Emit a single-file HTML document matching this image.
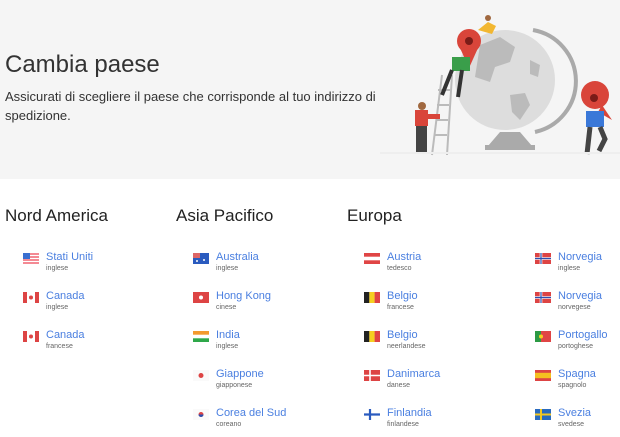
<!DOCTYPE html><html><head><meta charset="utf-8"><style>
*{margin:0;padding:0;box-sizing:border-box}
body{width:620px;height:434px;background:#fff;font-family:"Liberation Sans",Arial,sans-serif;position:relative;overflow:hidden}
.hdr{position:absolute;left:0;top:0;width:620px;height:179px;background:#f5f5f5}
h1{position:absolute;left:5px;top:51px;font-size:24px;font-weight:normal;color:#333}
.sub{position:absolute;left:5px;top:87px;width:400px;font-size:13px;line-height:19px;color:#333}
h2{position:absolute;top:206px;font-size:17px;font-weight:normal;color:#222}
.it{position:absolute;height:30px}
.it .f{position:absolute;left:0;top:2px;width:16px;height:11px}
.it .n{position:absolute;left:23px;top:0;font-size:11px;color:#4a7fe0;white-space:nowrap}
.it .l{position:absolute;left:23px;top:14px;font-size:7px;color:#666;white-space:nowrap}
</style></head><body>
<div class="hdr"></div>
<h1>Cambia paese</h1>
<div class="sub">Assicurati di scegliere il paese che corrisponde al tuo indirizzo di spedizione.</div>
<svg style="position:absolute;left:380px;top:0" width="240" height="180">
<path d="M530 0" />
<path d="M153 30 A52 52 0 0 1 155 132" fill="none" stroke="#aaa" stroke-width="4" transform="translate(0,0)"/>
<circle cx="125" cy="80" r="50" fill="#ddd"/>
<path d="M100 45 l20 -8 15 10 -5 15 -15 5 -5 15 -15 -5 z M130 95 l15 -2 5 12 -10 15 -8 -8 z M150 60 l10 5 -2 12 -8 -3z" fill="#bbb"/>
<path d="M120 132 l-12 14 h44 l-12 -14z" fill="#aaa"/>
<rect x="105" y="145" width="50" height="5" fill="#aaa"/>
<path d="M62 75 l-10 80 M72 75 l-5 80 M58 90h12M57 105h12M56 120h12M55 135h12" stroke="#bbb" stroke-width="2"/>
<circle cx="89" cy="41" r="12" fill="#d9453a"/><path d="M80 48 l9 20 9-20z" fill="#d9453a"/><circle cx="89" cy="41" r="4" fill="#7a1c18"/>
<rect x="72" y="57" width="18" height="14" fill="#3a9e4a"/><path d="M72 70 l-10 25 M82 70 l-4 27" stroke="#333" stroke-width="4"/>
<path d="M98 30 l10 -8 8 4 -4 8z" fill="#f2b731"/><circle cx="108" cy="18" r="3" fill="#a0683f"/>
<rect x="35" y="110" width="13" height="16" fill="#d9453a"/><rect x="48" y="114" width="12" height="5" fill="#d9453a"/><rect x="36" y="126" width="11" height="28" fill="#444"/><circle cx="42" cy="106" r="4" fill="#a0683f"/>
<circle cx="215" cy="95" r="14" fill="#d9453a"/><path d="M222 105 l10 15 -14-8z" fill="#d9453a"/><circle cx="214" cy="98" r="4" fill="#7a1c18"/>
<rect x="206" y="111" width="18" height="16" fill="#3a78d8"/><path d="M210 127 l-3 27 M220 127 l5 12 -6 12" stroke="#444" stroke-width="5" fill="none"/>
<rect x="0" y="152" width="240" height="2" fill="#eee"/>
</svg>
<h2 style="left:5px">Nord America</h2><h2 style="left:176px">Asia Pacifico</h2><h2 style="left:347px">Europa</h2>

<div class="it" style="left:23px;top:251px"><svg class="f" viewBox="0 0 16 11"><rect width="16" height="11" fill="#fff"/><path d="M0 1h16M0 4h16M0 7h16M0 10h16" stroke="#e45" stroke-width="1.2"/><rect width="7" height="6" fill="#3a6fd0"/></svg><div class="n">Stati Uniti</div><div class="l">inglese</div></div>
<div class="it" style="left:23px;top:290px"><svg class="f" viewBox="0 0 16 11"><rect width="16" height="11" fill="#fff"/><rect width="4" height="11" fill="#d44"/><rect x="12" width="4" height="11" fill="#d44"/><circle cx="8" cy="5.5" r="2" fill="#d44"/></svg><div class="n">Canada</div><div class="l">inglese</div></div>
<div class="it" style="left:23px;top:329px"><svg class="f" viewBox="0 0 16 11"><rect width="16" height="11" fill="#fff"/><rect width="4" height="11" fill="#d44"/><rect x="12" width="4" height="11" fill="#d44"/><circle cx="8" cy="5.5" r="2" fill="#d44"/></svg><div class="n">Canada</div><div class="l">francese</div></div>

<div class="it" style="left:193px;top:251px"><svg class="f" viewBox="0 0 16 11"><rect width="16" height="11" fill="#2a5bbf"/><rect width="7" height="5" fill="#d66"/><circle cx="11" cy="7" r="1" fill="#fff"/><circle cx="4" cy="8" r="1" fill="#fff"/></svg><div class="n">Australia</div><div class="l">inglese</div></div>
<div class="it" style="left:193px;top:290px"><svg class="f" viewBox="0 0 16 11"><rect width="16" height="11" fill="#d44"/><circle cx="8" cy="5.5" r="2" fill="#fff"/></svg><div class="n">Hong Kong</div><div class="l">cinese</div></div>
<div class="it" style="left:193px;top:329px"><svg class="f" viewBox="0 0 16 11"><rect width="16" height="11" fill="#fff"/><rect width="16" height="3.7" fill="#f39a2e"/><rect y="7.3" width="16" height="3.7" fill="#2fa84a"/></svg><div class="n">India</div><div class="l">inglese</div></div>
<div class="it" style="left:193px;top:368px"><svg class="f" viewBox="0 0 16 11"><rect width="16" height="11" fill="#fafafa"/><circle cx="8" cy="5.5" r="2.5" fill="#d44"/></svg><div class="n">Giappone</div><div class="l">giapponese</div></div>
<div class="it" style="left:193px;top:407px"><svg class="f" viewBox="0 0 16 11"><rect width="16" height="11" fill="#fafafa"/><circle cx="8" cy="5.5" r="2.5" fill="#d44"/><path d="M5.5 5.5a2.5 2.5 0 0 0 5 0z" fill="#2a4fb0"/></svg><div class="n">Corea del Sud</div><div class="l">coreano</div></div>

<div class="it" style="left:364px;top:251px"><svg class="f" viewBox="0 0 16 11"><rect width="16" height="11" fill="#e04545"/><rect y="3.7" width="16" height="3.6" fill="#fff"/></svg><div class="n">Austria</div><div class="l">tedesco</div></div>
<div class="it" style="left:364px;top:290px"><svg class="f" viewBox="0 0 16 11"><rect width="5.4" height="11" fill="#222"/><rect x="5.3" width="5.4" height="11" fill="#f5d020"/><rect x="10.6" width="5.4" height="11" fill="#e04545"/></svg><div class="n">Belgio</div><div class="l">francese</div></div>
<div class="it" style="left:364px;top:329px"><svg class="f" viewBox="0 0 16 11"><rect width="5.4" height="11" fill="#222"/><rect x="5.3" width="5.4" height="11" fill="#f5d020"/><rect x="10.6" width="5.4" height="11" fill="#e04545"/></svg><div class="n">Belgio</div><div class="l">neerlandese</div></div>
<div class="it" style="left:364px;top:368px"><svg class="f" viewBox="0 0 16 11"><rect width="16" height="11" fill="#d44"/><path d="M0 5.5h16M6 0v11" stroke="#fff" stroke-width="1.6"/></svg><div class="n">Danimarca</div><div class="l">danese</div></div>
<div class="it" style="left:364px;top:407px"><svg class="f" viewBox="0 0 16 11"><rect width="16" height="11" fill="#fff"/><path d="M0 5.5h16M6 0v11" stroke="#2a5bbf" stroke-width="2.2"/></svg><div class="n">Finlandia</div><div class="l">finlandese</div></div>

<div class="it" style="left:535px;top:251px"><svg class="f" viewBox="0 0 16 11"><rect width="16" height="11" fill="#d44"/><path d="M0 5.5h16M6 0v11" stroke="#fff" stroke-width="2.6"/><path d="M0 5.5h16M6 0v11" stroke="#2a4fb0" stroke-width="1.2"/></svg><div class="n">Norvegia</div><div class="l">inglese</div></div>
<div class="it" style="left:535px;top:290px"><svg class="f" viewBox="0 0 16 11"><rect width="16" height="11" fill="#d44"/><path d="M0 5.5h16M6 0v11" stroke="#fff" stroke-width="2.6"/><path d="M0 5.5h16M6 0v11" stroke="#2a4fb0" stroke-width="1.2"/></svg><div class="n">Norvegia</div><div class="l">norvegese</div></div>
<div class="it" style="left:535px;top:329px"><svg class="f" viewBox="0 0 16 11"><rect width="16" height="11" fill="#e04545"/><rect width="6" height="11" fill="#2c9a44"/><circle cx="6" cy="5.5" r="2" fill="#f5d020"/></svg><div class="n">Portogallo</div><div class="l">portoghese</div></div>
<div class="it" style="left:535px;top:368px"><svg class="f" viewBox="0 0 16 11"><rect width="16" height="11" fill="#d44"/><rect y="2.8" width="16" height="5.4" fill="#f5c020"/></svg><div class="n">Spagna</div><div class="l">spagnolo</div></div>
<div class="it" style="left:535px;top:407px"><svg class="f" viewBox="0 0 16 11"><rect width="16" height="11" fill="#2a6bbf"/><path d="M0 5.5h16M6 0v11" stroke="#f5c820" stroke-width="2"/></svg><div class="n">Svezia</div><div class="l">svedese</div></div>
</body></html>
